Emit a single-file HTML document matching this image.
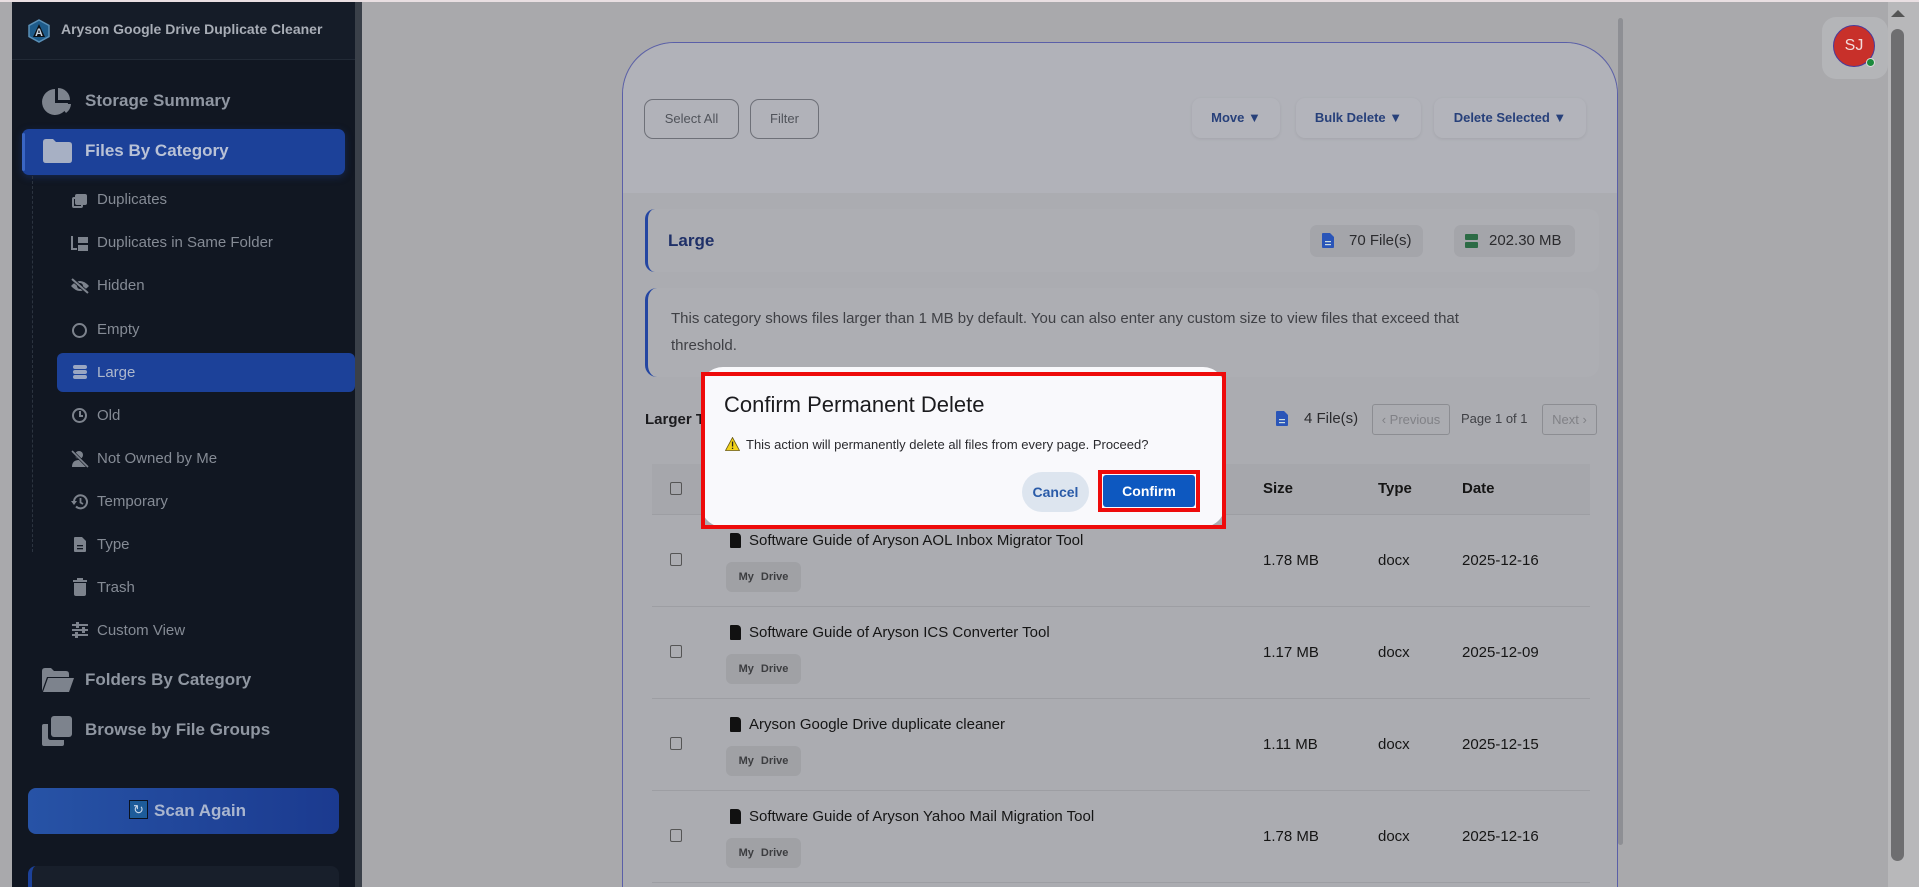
<!DOCTYPE html>
<html><head><meta charset="utf-8"><style>
*{box-sizing:border-box;margin:0;padding:0}
html,body{width:1919px;height:887px;overflow:hidden}
body{background:#a9a9ac;font-family:"Liberation Sans",sans-serif;position:relative}
#wrap{position:absolute;left:0;top:0;width:1919px;height:887px;overflow:hidden}
.abs{position:absolute}
#topline{left:0;top:0;width:1919px;height:2px;background:#e9dfe2}
#side{left:12px;top:2px;width:350px;height:885px;background:#111722}
#sidehead{left:12px;top:2px;width:343px;height:58px;background:#151c28;border-bottom:1px solid #222a36}
.t{position:absolute;color:#8d939d;white-space:nowrap}
.main{font-size:17px;font-weight:bold;color:#8f96a1}
.sub{font-size:15px;color:#858b95}
.ico{position:absolute;background:#7d838d}
#card{left:622px;top:42px;width:996px;height:845px;border:1px solid #5a5fa8;border-bottom:none;border-radius:52px 52px 0 0;background:#abacb1}
#cardtop{left:623px;top:43px;width:994px;height:150px;border-radius:52px 52px 0 0;background:#b1b2b9}
.btn{position:absolute;border:1px solid #6e7078;border-radius:9px;font-size:13px;color:#50535a;text-align:center;line-height:38px}
.bb{position:absolute;background:#b3b4bb;border-radius:9px;font-size:13px;font-weight:bold;color:#27407a;text-align:center;line-height:40px;box-shadow:0 1px 3px rgba(0,0,0,.08)}
.row{position:absolute;left:652px;width:938px;border-bottom:1px solid #9d9ea3;height:92px}
.cb{position:absolute;width:12px;height:13px;border:1px solid #555;border-radius:2px}
.fname{position:absolute;font-size:15px;color:#151515}
.badge{position:absolute;width:75px;height:30px;background:#a0a1a5;border-radius:6px;font-size:11px;color:#3c3d40;line-height:30px;text-align:center;font-weight:bold;word-spacing:4px}
.val{position:absolute;font-size:15px;color:#151515}
</style></head><body><div id="wrap">
<div class="abs" id="topline"></div>
<div class="abs" id="side"></div>
<div class="abs" id="sidehead"></div>
<div class="abs" style="left:355px;top:2px;width:7px;height:885px;background:#3a4049"></div>
<svg class="abs" style="left:28px;top:19px" width="22" height="24" viewBox="0 0 22 24"><polygon points="11,1 21,6.5 21,17.5 11,23 1,17.5 1,6.5" fill="#1e5b8a" stroke="#5a8fb6" stroke-width="1.5"/><polygon points="11,5 17,18 5,18" fill="#0c0f14"/><text x="11" y="17" font-size="11" font-weight="bold" fill="#c9d2de" text-anchor="middle" font-family="Liberation Sans">A</text></svg>
<div class="t" style="left:61px;top:21px;font-size:14px;font-weight:bold;color:#a8adb6">Aryson Google Drive Duplicate Cleaner</div>
<svg class="abs" style="left:41px;top:87px" width="32" height="30" viewBox="0 0 32 30"><path d="M14 2 A13 13 0 1 0 27 16 L14 16Z" fill="#7d838d"/><path d="M17 1 A12 12 0 0 1 29 13 L17 13Z" fill="#7d838d"/><path d="M18 17 L30 17 A12 12 0 0 1 25 26Z" fill="#7d838d"/></svg>
<div class="t main" style="left:85px;top:91px">Storage Summary</div>
<div class="abs" style="left:22px;top:129px;width:323px;height:46px;background:#1c4199;border-radius:7px;box-shadow:0 2px 8px rgba(30,70,160,.35)"></div>
<div class="abs" style="left:22px;top:133px;width:3px;height:38px;background:#3a66c4;border-radius:2px"></div>
<svg class="abs" style="left:41px;top:138px" width="32" height="26" viewBox="0 0 32 26"><path d="M2 4 Q2 1 5 1 L12 1 L15 4 L28 4 Q31 4 31 7 L31 22 Q31 25 28 25 L5 25 Q2 25 2 22Z" fill="#a7b0c4"/></svg>
<div class="t main" style="left:85px;top:141px;color:#b9c2d6">Files By Category</div>
<div class="abs" style="left:32px;top:176px;width:0;height:376px;border-left:1px dashed #2c3440"></div>
<div class="ico" style="left:75px;top:194px;width:12px;height:11px;border-radius:2px"></div><div class="abs" style="left:72px;top:197px;width:11px;height:11px;border:2px solid #7d838d;border-radius:2px"></div>
<div class="t sub" style="left:97px;top:191px">Duplicates</div>
<div class="ico" style="left:71px;top:236px;width:2px;height:14px"></div><div class="ico" style="left:71px;top:248px;width:6px;height:2px"></div><div class="ico" style="left:78px;top:237px;width:10px;height:6px"></div><div class="ico" style="left:78px;top:245px;width:10px;height:6px"></div>
<div class="t sub" style="left:97px;top:234px">Duplicates in Same Folder</div>
<svg class="abs" style="left:70px;top:278px" width="20" height="16" viewBox="0 0 20 16"><path d="M1 8 Q10 -2 19 8 Q10 18 1 8Z" fill="#7d838d"/><circle cx="10" cy="8" r="3" fill="#111722"/><line x1="2" y1="1" x2="18" y2="15" stroke="#111722" stroke-width="3.5"/><line x1="2" y1="1" x2="18" y2="15" stroke="#7d838d" stroke-width="2"/></svg>
<div class="t sub" style="left:97px;top:277px">Hidden</div>
<div class="abs" style="left:72px;top:323px;width:15px;height:15px;border:2px solid #7d838d;border-radius:50%"></div>
<div class="t sub" style="left:97px;top:321px">Empty</div>
<div class="abs" style="left:57px;top:353px;width:298px;height:39px;background:#1c4199;border-radius:6px"></div>
<div class="abs" style="left:73px;top:365px;width:14px;height:4px;background:#9aa6c2;border-radius:3px"></div><div class="abs" style="left:73px;top:370px;width:14px;height:4px;background:#9aa6c2;border-radius:2px"></div><div class="abs" style="left:73px;top:375px;width:14px;height:4px;background:#9aa6c2;border-radius:3px"></div>
<div class="t sub" style="left:97px;top:364px;color:#aeb8cc">Large</div>
<div class="abs" style="left:72px;top:408px;width:15px;height:15px;border:2px solid #7d838d;border-radius:50%"></div><div class="ico" style="left:79px;top:411px;width:2px;height:5px"></div><div class="ico" style="left:79px;top:415px;width:4px;height:2px"></div>
<div class="t sub" style="left:97px;top:407px">Old</div>
<svg class="abs" style="left:70px;top:450px" width="20" height="18" viewBox="0 0 20 18"><circle cx="9" cy="5" r="4" fill="#7d838d"/><path d="M2 17 Q2 10 9 10 Q16 10 16 17Z" fill="#7d838d"/><line x1="2" y1="1" x2="18" y2="17" stroke="#111722" stroke-width="3"/><line x1="2" y1="1" x2="18" y2="17" stroke="#7d838d" stroke-width="1.6"/></svg>
<div class="t sub" style="left:97px;top:450px">Not Owned by Me</div>
<svg class="abs" style="left:71px;top:493px" width="18" height="18" viewBox="0 0 18 18"><path d="M3 9 A6.5 6.5 0 1 1 5 13.5" fill="none" stroke="#7d838d" stroke-width="2"/><path d="M0 8 L6 8 L3 12Z" fill="#7d838d"/><path d="M9.5 5 L9.5 9.5 L12 11" fill="none" stroke="#7d838d" stroke-width="1.8"/></svg>
<div class="t sub" style="left:97px;top:493px">Temporary</div>
<svg class="abs" style="left:73px;top:536px" width="14" height="17" viewBox="0 0 14 17"><path d="M1 2 Q1 1 2 1 L9 1 L13 5 L13 15 Q13 16 12 16 L2 16 Q1 16 1 15Z" fill="#7d838d"/><rect x="4" y="9" width="6" height="1.3" fill="#111722"/><rect x="4" y="12" width="6" height="1.3" fill="#111722"/></svg>
<div class="t sub" style="left:97px;top:536px">Type</div>
<div class="ico" style="left:73px;top:580px;width:14px;height:2px"></div><div class="ico" style="left:77px;top:578px;width:6px;height:2px"></div><div class="ico" style="left:74px;top:583px;width:12px;height:13px;border-radius:0 0 2px 2px"></div>
<div class="t sub" style="left:97px;top:579px">Trash</div>
<div class="ico" style="left:72px;top:624px;width:16px;height:2px"></div><div class="ico" style="left:72px;top:629px;width:16px;height:2px"></div><div class="ico" style="left:72px;top:634px;width:16px;height:2px"></div><div class="ico" style="left:76px;top:622px;width:3px;height:6px"></div><div class="ico" style="left:82px;top:627px;width:3px;height:6px"></div><div class="ico" style="left:75px;top:632px;width:3px;height:6px"></div>
<div class="t sub" style="left:97px;top:622px">Custom View</div>
<svg class="abs" style="left:41px;top:667px" width="34" height="26" viewBox="0 0 34 26"><path d="M1 4 Q1 1 4 1 L10 1 L13 4 L25 4 Q28 4 28 7 L28 10 L6 10 L1 24Z" fill="#7d838d"/><path d="M7 11 L33 11 L28 25 L2 25Z" fill="#7d838d"/></svg>
<div class="t main" style="left:85px;top:670px">Folders By Category</div>
<svg class="abs" style="left:41px;top:715px" width="32" height="32" viewBox="0 0 32 32"><rect x="10" y="1" width="21" height="21" rx="3" fill="#7d838d"/><path d="M7 9 L3 9 Q1 9 1 11 L1 29 Q1 31 3 31 L21 31 Q23 31 23 29 L23 25 L10 25 Q7 25 7 22Z" fill="#7d838d"/></svg>
<div class="t main" style="left:85px;top:720px">Browse by File Groups</div>
<div class="abs" style="left:28px;top:788px;width:311px;height:46px;border-radius:8px;background:linear-gradient(90deg,#2753a6,#1b3a8f)"></div>
<div class="abs" style="left:129px;top:800px;width:19px;height:19px;background:#1d5c9a;border:1px solid #0a1220;color:#c9d8ea;font-size:13px;text-align:center;line-height:17px">↻</div>
<div class="t" style="left:154px;top:801px;font-size:17px;font-weight:bold;color:#aab6cf">Scan Again</div>
<div class="abs" style="left:28px;top:866px;width:311px;height:21px;border-radius:8px 8px 0 0;background:#181f2b;border-left:4px solid #1c4199"></div>
<div class="abs" id="card"></div>
<div class="abs" id="cardtop"></div>
<div class="btn" style="left:644px;top:99px;width:95px;height:40px">Select All</div>
<div class="btn" style="left:750px;top:99px;width:69px;height:40px">Filter</div>
<div class="bb" style="left:1192px;top:98px;width:88px">Move ▼</div>
<div class="bb" style="left:1296px;top:98px;width:125px">Bulk Delete ▼</div>
<div class="bb" style="left:1434px;top:98px;width:152px">Delete Selected ▼</div>
<div class="abs" style="left:645px;top:209px;width:954px;height:63px;border-left:3px solid #2446a2;border-radius:10px;background:#adaeb3"></div>
<div class="t" style="left:668px;top:231px;font-size:17px;font-weight:bold;color:#1f3068">Large</div>
<div class="abs" style="left:1310px;top:225px;width:113px;height:32px;border-radius:7px;background:#a4a5aa"></div>
<svg class="abs" style="left:1322px;top:233px" width="12" height="15" viewBox="0 0 12 15"><path d="M0 1 Q0 0 1 0 L8 0 L12 4 L12 14 Q12 15 11 15 L1 15 Q0 15 0 14Z" fill="#2a55b8"/><rect x="3" y="8" width="6" height="1.2" fill="#cdd"/><rect x="3" y="11" width="6" height="1.2" fill="#cdd"/></svg>
<div class="t" style="left:1349px;top:232px;font-size:15px;color:#2b2b2e">70 File(s)</div>
<div class="abs" style="left:1454px;top:225px;width:121px;height:32px;border-radius:7px;background:#a4a5aa"></div>
<div class="abs" style="left:1465px;top:234px;width:13px;height:6px;background:#2c6b45;border-radius:1px"></div><div class="abs" style="left:1465px;top:242px;width:13px;height:6px;background:#2c6b45;border-radius:1px"></div>
<div class="t" style="left:1489px;top:232px;font-size:15px;color:#2b2b2e">202.30 MB</div>
<div class="abs" style="left:645px;top:288px;width:954px;height:89px;border-left:3px solid #2446a2;border-radius:12px;background:#adaeb3"></div>
<div class="t" style="left:671px;top:310px;font-size:15px;color:#3f4045">This category shows files larger than 1 MB by default. You can also enter any custom size to view files that exceed that</div>
<div class="t" style="left:671px;top:337px;font-size:15px;color:#3f4045">threshold.</div>
<div class="t" style="left:645px;top:411px;font-size:15px;font-weight:bold;color:#1b1b1e">Larger T</div>
<svg class="abs" style="left:1276px;top:411px" width="12" height="15" viewBox="0 0 12 15"><path d="M0 1 Q0 0 1 0 L8 0 L12 4 L12 14 Q12 15 11 15 L1 15 Q0 15 0 14Z" fill="#2a55b8"/><rect x="3" y="8" width="6" height="1.2" fill="#cdd"/><rect x="3" y="11" width="6" height="1.2" fill="#cdd"/></svg>
<div class="t" style="left:1304px;top:410px;font-size:15px;color:#2b2b2e">4 File(s)</div>
<div class="abs" style="left:1372px;top:404px;width:78px;height:31px;border:1px solid #8c8d92;border-radius:3px;font-size:13px;color:#808186;line-height:29px;text-align:center">‹ Previous</div>
<div class="t" style="left:1461px;top:411px;font-size:13px;color:#3f4045">Page 1 of 1</div>
<div class="abs" style="left:1542px;top:404px;width:55px;height:31px;border:1px solid #8c8d92;border-radius:3px;font-size:13px;color:#808186;line-height:29px;text-align:center">Next ›</div>
<div class="abs" style="left:652px;top:464px;width:938px;height:51px;background:#a6a7ac;border-bottom:1px solid #9d9ea3"></div>
<div class="cb" style="left:670px;top:482px"></div>
<div class="t" style="left:1263px;top:480px;font-size:15px;font-weight:bold;color:#151515">Size</div>
<div class="t" style="left:1378px;top:480px;font-size:15px;font-weight:bold;color:#151515">Type</div>
<div class="t" style="left:1462px;top:480px;font-size:15px;font-weight:bold;color:#151515">Date</div>
<div class="row" style="top:515px"></div><div class="row" style="top:607px"></div><div class="row" style="top:699px"></div><div class="row" style="top:791px;height:92px"></div>
<div class="cb" style="left:670px;top:553px"></div><div class="abs" style="left:730px;top:533px;width:11px;height:15px;background:#111;border-radius:1px 4px 1px 1px"></div><div class="fname" style="left:749px;top:532px">Software Guide of Aryson AOL Inbox Migrator Tool</div><div class="badge" style="left:726px;top:562px">My Drive</div><div class="val" style="left:1263px;top:552px">1.78 MB</div><div class="val" style="left:1378px;top:552px">docx</div><div class="val" style="left:1462px;top:552px">2025-12-16</div>
<div class="cb" style="left:670px;top:645px"></div><div class="abs" style="left:730px;top:625px;width:11px;height:15px;background:#111;border-radius:1px 4px 1px 1px"></div><div class="fname" style="left:749px;top:624px">Software Guide of Aryson ICS Converter Tool</div><div class="badge" style="left:726px;top:654px">My Drive</div><div class="val" style="left:1263px;top:644px">1.17 MB</div><div class="val" style="left:1378px;top:644px">docx</div><div class="val" style="left:1462px;top:644px">2025-12-09</div>
<div class="cb" style="left:670px;top:737px"></div><div class="abs" style="left:730px;top:717px;width:11px;height:15px;background:#111;border-radius:1px 4px 1px 1px"></div><div class="fname" style="left:749px;top:716px">Aryson Google Drive duplicate cleaner</div><div class="badge" style="left:726px;top:746px">My Drive</div><div class="val" style="left:1263px;top:736px">1.11 MB</div><div class="val" style="left:1378px;top:736px">docx</div><div class="val" style="left:1462px;top:736px">2025-12-15</div>
<div class="cb" style="left:670px;top:829px"></div><div class="abs" style="left:730px;top:809px;width:11px;height:15px;background:#111;border-radius:1px 4px 1px 1px"></div><div class="fname" style="left:749px;top:808px">Software Guide of Aryson Yahoo Mail Migration Tool</div><div class="badge" style="left:726px;top:838px">My Drive</div><div class="val" style="left:1263px;top:828px">1.78 MB</div><div class="val" style="left:1378px;top:828px">docx</div><div class="val" style="left:1462px;top:828px">2025-12-16</div>
<div class="abs" style="left:701px;top:367px;width:524px;height:160px;background:#f9f9fc;border-radius:22px"></div>
<div class="abs" style="left:701px;top:372px;width:525px;height:157px;border:4px solid #ee0b0b"></div>
<div class="t" style="left:724px;top:392px;font-size:22px;color:#1b1b1e">Confirm Permanent Delete</div>
<svg class="abs" style="left:725px;top:437px" width="15" height="14" viewBox="0 0 15 14"><path d="M7.5 0.5 L14.5 13.5 L0.5 13.5Z" fill="#f2d21a" stroke="#6a5a10" stroke-width=".8"/><rect x="6.9" y="4.5" width="1.3" height="5" fill="#222"/><rect x="6.9" y="10.7" width="1.3" height="1.3" fill="#222"/></svg>
<div class="t" style="left:746px;top:437px;font-size:13px;color:#2a2a2e">This action will permanently delete all files from every page. Proceed?</div>
<div class="abs" style="left:1022px;top:472px;width:67px;height:40px;border-radius:20px;background:#dde5ef;color:#2a5ba8;font-size:14px;font-weight:bold;text-align:center;line-height:40px">Cancel</div>
<div class="abs" style="left:1098px;top:470px;width:102px;height:42px;border:4px solid #ee0b0b"></div>
<div class="abs" style="left:1103px;top:475px;width:92px;height:32px;background:#0d58c0;border-radius:3px;color:#fff;font-size:14px;font-weight:bold;text-align:center;line-height:32px">Confirm</div>
<div class="abs" style="left:1618px;top:18px;width:5px;height:827px;background:#8e8f94;border-radius:3px"></div>
<div class="abs" style="left:1822px;top:17px;width:66px;height:62px;border-radius:14px;background:#b4b5b8"></div>
<div class="abs" style="left:1833px;top:25px;width:42px;height:42px;border-radius:50%;background:#c8302a;border:1px solid #4a3a9a;color:#f2dcdc;font-size:16px;text-align:center;line-height:40px">SJ</div>
<div class="abs" style="left:1866px;top:58px;width:9px;height:9px;border-radius:50%;background:#1b8a3c;border:1.5px solid #ddd"></div>
<div class="abs" style="left:1888px;top:2px;width:31px;height:885px;background:#b8b8ba"></div>
<div class="abs" style="left:1891px;top:10px;width:0;height:0;border-left:7px solid transparent;border-right:7px solid transparent;border-bottom:7px solid #555"></div>
<div class="abs" style="left:1891px;top:29px;width:13px;height:832px;background:#6e6e70;border-radius:7px"></div>
</div></body></html>
